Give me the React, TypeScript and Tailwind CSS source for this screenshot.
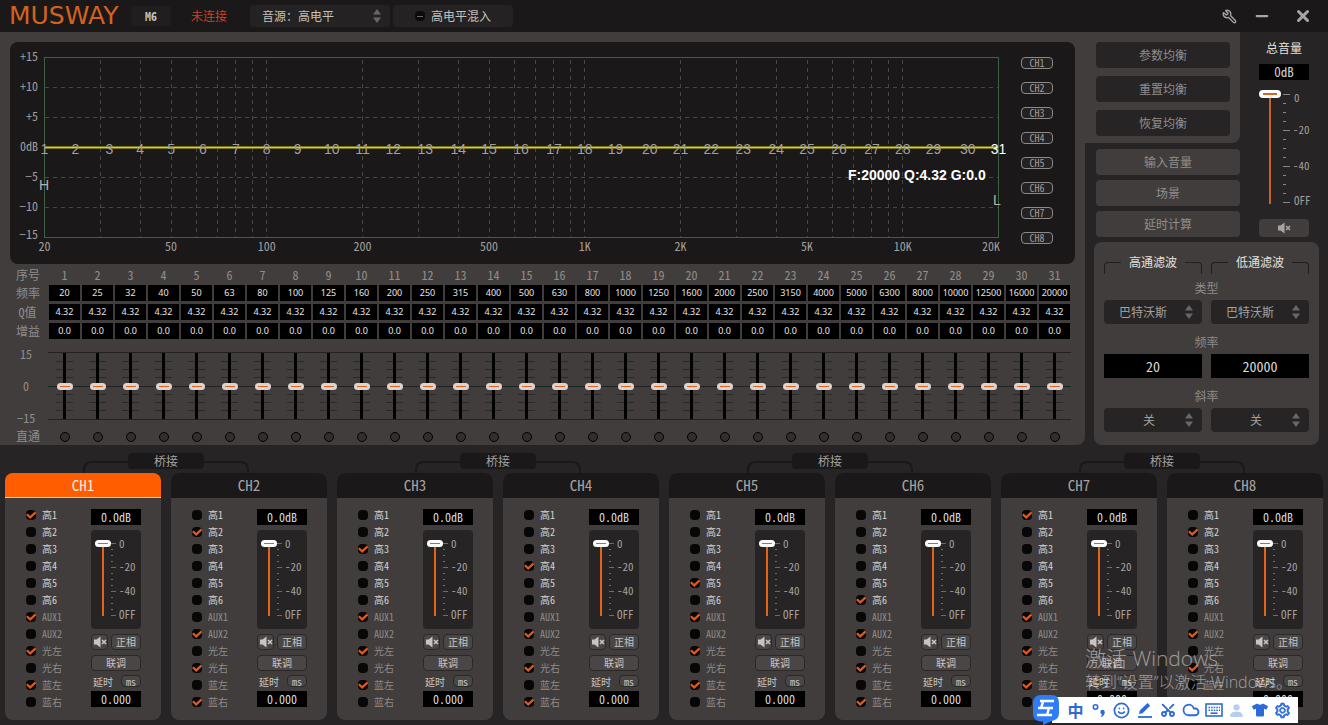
import type { ReactNode } from "react";
import { Cloud, Minus, Scissors, Smile, Wrench, X } from "lucide-react";
import { AiOutlineSetting } from "react-icons/ai";
import { BsPersonFill } from "react-icons/bs";
import { FaTshirt } from "react-icons/fa";

const FREQS = [
  20, 25, 32, 40, 50, 63, 80, 100, 125, 160, 200, 250, 315, 400, 500, 630, 800, 1000, 1250, 1600,
  2000, 2500, 3150, 4000, 5000, 6300, 8000, 10000, 12500, 16000, 20000,
];

const CHANNELS = [1, 2, 3, 4, 5, 6, 7, 8];

const INPUTS = [
  "高1", "高2", "高3", "高4", "高5", "高6",
  "AUX1", "AUX2", "光左", "光右", "蓝左", "蓝右",
];

// indexes into INPUTS that are routed to each output channel
const ROUTES: Record<number, number[]> = {
  1: [0, 6, 8, 10],
  2: [1, 7, 9, 11],
  3: [2, 6, 8, 10],
  4: [3, 7, 9, 11],
  5: [4, 6, 8, 10],
  6: [5, 7, 9, 11],
  7: [0, 6, 8, 10],
  8: [1, 7, 9, 11],
};

// 20Hz..20kHz on a log axis, 318px per decade
const freqX = (f: number) => 34.5 + Math.log10(f / 20) * 318;

const Arrows = () => (
  <svg viewBox="0 0 10 16" className="w-[10px] h-4 fill-[#6b6766]" aria-hidden="true">
    <path d="M5 1 L9 6.5 H1 Z M5 15 L1 9.5 H9 Z" />
  </svg>
);

const MuteIcon = ({ className }: { className: string }) => (
  <svg viewBox="0 0 14 12" className={className} aria-hidden="true">
    <path d="M1 3.5 H3.5 L7.5 0.5 V11.5 L3.5 8.5 H1 Z" fill="currentColor" />
    <path d="M9 4 L13 8 M13 4 L9 8" stroke="currentColor" strokeWidth="1.6" />
  </svg>
);

type PickerProps = { label: string; options: string[]; className: string };

const Picker = ({ label, options, className }: PickerProps) => (
  <div className="grid items-center">
    <select
      aria-label={label}
      className={`[grid-area:1/1] w-full appearance-none rounded outline-none ${className}`}
    >
      {options.map((o) => (
        <option key={o}>{o}</option>
      ))}
    </select>
    <span className="[grid-area:1/1] justify-self-end mr-2 pointer-events-none">
      <Arrows />
    </span>
  </div>
);

const Header = () => (
  <header className="flex items-center h-8 pl-[9px] pr-4 bg-[#1a1818] text-xs text-[#c4c0be]">
    <h1 className="w-[122px] font-['DejaVu_Sans',sans-serif] text-[25px] leading-8 text-[#d4621f]">
      MUSWAY
    </h1>
    <span className="w-10 h-5 leading-5 text-center font-bold rounded bg-[#201e1e]">M6</span>
    <span className="ml-5 text-[#c8412c]">未连接</span>
    <div className="w-[140px] ml-[23px]">
      <Picker
        label="音源"
        options={["音源：高电平", "音源：AUX", "音源：光纤", "音源：蓝牙"]}
        className="h-[22px] pl-3 bg-[#242222]"
      />
    </div>
    <label className="flex items-center gap-1.5 w-[120px] h-[22px] ml-[3px] pl-[22px] rounded bg-[#242222]">
      <span className="grid place-items-center">
        <input
          type="checkbox"
          className="[grid-area:1/1] appearance-none w-2.5 h-2.5 rounded-sm bg-[#0c0b0b]"
        />
        <span className="[grid-area:1/1] w-1.5 h-px bg-[#6a6665]" />
      </span>
      高电平混入
    </label>
    <div className="flex items-center ml-auto text-[#aaa6a5]">
      <button type="button" aria-label="设置">
        <Wrench size={15} strokeWidth={2.2} className="-scale-x-100" />
      </button>
      <button type="button" aria-label="最小化" className="ml-4">
        <Minus size={18} strokeWidth={3} />
      </button>
      <button type="button" aria-label="关闭" className="ml-[23px]">
        <X size={18} strokeWidth={4} />
      </button>
    </div>
  </header>
);

const EqGraph = () => {
  const gridFreqs = [
    30, 40, 50, 60, 70, 80, 90, 100, 200, 300, 400, 500, 600, 700, 800, 900, 1000, 2000, 3000, 4000,
    5000, 6000, 7000, 8000, 9000, 10000,
  ];
  const xLabels: [number, string][] = [
    [20, "20"], [50, "50"], [100, "100"], [200, "200"], [500, "500"],
    [1000, "1K"], [2000, "2K"], [5000, "5K"], [10000, "10K"],
  ];
  const yLabels = ["+15", "+10", "+5", "0dB", "−5", "−10", "−15"];

  return (
    <svg viewBox="0 0 1000 222" className="flex-1 min-w-0 text-xs" role="img" aria-label="EQ">
      <g stroke="#494645" strokeDasharray="4 4">
        {gridFreqs.map((f) => (
          <line key={f} x1={Math.floor(freqX(f)) + 0.5} x2={Math.floor(freqX(f)) + 0.5} y1="18" y2="195" />
        ))}
        {[45, 75, 135, 165].map((y) => (
          <line key={y} x1="35" x2="988" y1={y + 0.5} y2={y + 0.5} />
        ))}
      </g>
      <rect x="34.5" y="15.5" width="954" height="180" fill="none" stroke="#3d6043" />

      <g fill="#a19d9b">
        {yLabels.map((t, i) => (
          <text key={t} x="28" y={i === 6 ? 197 : 19 + i * 30} textAnchor="end">
            {t}
          </text>
        ))}
        {xLabels.map(([f, t]) => (
          <text key={t} x={freqX(f)} y="209" textAnchor="middle">
            {t}
          </text>
        ))}
        <text x="990" y="209" textAnchor="end">20K</text>
      </g>

      {/* response curve */}
      <line x1="35" x2="988" y1="105.5" y2="105.5" stroke="#77741a" strokeWidth="3" />
      <line x1="35" x2="988" y1="105.5" y2="105.5" stroke="#d8d310" />

      <g className="font-['Liberation_Sans',sans-serif] text-sm" textAnchor="middle">
        {FREQS.map((f, i) => (
          <text key={f} x={freqX(f)} y="112" fill={i === 30 ? "#ffffff" : "#a39f9e"}>
            {i + 1}
          </text>
        ))}
        <text x="34" y="148" fill="#b4b0ae">H</text>
        <text x="987" y="163" fill="#b4b0ae">L</text>
      </g>
      <text
        x="838"
        y="138"
        fill="#ffffff"
        className="font-['Liberation_Sans',sans-serif] text-sm font-bold"
      >
        F:20000 Q:4.32 G:0.0
      </text>
    </svg>
  );
};

const EqTable = () => {
  const rows: [string, (f: number) => string][] = [
    ["频率", (f) => String(f)],
    ["Q值", () => "4.32"],
    ["增益", () => "0.0"],
  ];

  return (
    <table className="w-[calc(100%-27px)] ml-3.5 table-fixed border-separate border-spacing-x-0.5 border-spacing-y-[3px] text-xs leading-[15px] text-[#918d8b]">
      <thead>
        <tr>
          <th className="p-0 pr-2 font-normal whitespace-nowrap">序号</th>
          {FREQS.map((f, i) => (
            <th key={f} className="p-0 font-normal">
              {i + 1}
            </th>
          ))}
        </tr>
      </thead>
      <tbody>
        {rows.map(([name, value]) => (
          <tr key={name}>
            <th className="h-4 p-0 pr-2 font-normal leading-4 whitespace-nowrap">{name}</th>
            {FREQS.map((f, i) => (
              <td key={f} className="h-4 p-0">
                <input
                  type="text"
                  aria-label={`${name} ${i + 1}`}
                  defaultValue={value(f)}
                  className="block w-full h-4 bg-black text-center font-['Noto_Sans',sans-serif] text-[9px] leading-4 text-[#e8e5e3] outline-none"
                />
              </td>
            ))}
          </tr>
        ))}
      </tbody>
    </table>
  );
};

const EqSliders = () => (
  <div className="grid grid-cols-[repeat(32,minmax(0,1fr))] gap-x-0.5 mt-2.5 ml-4 mr-[15px] text-xs leading-4 text-[#918d8b]">
    <div className="flex flex-col items-center justify-between w-5 h-20 -my-1.5">
      <span>15</span>
      <span>0</span>
      <span>−15</span>
    </div>
    {FREQS.map((f, i) => (
      <div key={f} className="grid justify-items-center -mx-px h-[68px] border-y border-[#242121]">
        <svg viewBox="0 0 33 66" className="[grid-area:1/1] w-full h-[66px]" aria-hidden="true">
          <path
            d="M8 8.5 H25 M8 16.5 H25 M8 24.5 H25 M8 41.5 H25 M8 49.5 H25 M8 57.5 H25"
            stroke="#2b2827"
          />
          <path d="M0 33.5 H33" stroke="#242121" />
        </svg>
        <input
          type="range"
          min={-15}
          max={15}
          defaultValue={0}
          aria-label={`增益 ${i + 1}`}
          className="[grid-area:1/1] appearance-none w-4 h-[66px] [writing-mode:vertical-lr] [direction:rtl] bg-transparent bg-[linear-gradient(#000,#000)] bg-[length:3px_100%] bg-center bg-no-repeat [&::-webkit-slider-thumb]:appearance-none [&::-webkit-slider-thumb]:w-4 [&::-webkit-slider-thumb]:h-[7px] [&::-webkit-slider-thumb]:rounded-sm [&::-webkit-slider-thumb]:bg-[#ddd3cf] [&::-webkit-slider-thumb]:bg-[linear-gradient(#d9641e,#d9641e)] [&::-webkit-slider-thumb]:bg-[length:10px_1px] [&::-webkit-slider-thumb]:bg-center [&::-webkit-slider-thumb]:bg-no-repeat"
        />
      </div>
    ))}
    <span className="mt-2 whitespace-nowrap">直通</span>
    {FREQS.map((f, i) => (
      <input
        key={f}
        type="radio"
        name={`bypass-${i}`}
        aria-label={`直通 ${i + 1}`}
        className="mt-3 justify-self-center appearance-none w-2.5 h-2.5 rounded-full border border-black bg-[#312e2d]"
      />
    ))}
  </div>
);

const FilterTitle = ({ children }: { children: ReactNode }) => (
  <div className="flex items-start">
    <span className="flex-1 h-3 mt-2 border-t border-l rounded-tl border-[#211e1e]" />
    <h2 className="px-2 leading-4 font-medium text-[#e4e1df]">{children}</h2>
    <span className="flex-1 h-3 mt-2 border-t border-r rounded-tr border-[#211e1e]" />
  </div>
);

const FilterPanel = () => {
  const select = "h-6 bg-[#262424] text-center [text-align-last:center] text-[#a5a19f]";
  const box = "w-full h-6 bg-black text-center text-sm text-[#dcd9d7] outline-none";
  return (
    <section className="mx-[9px] mt-[5px] h-[203px] px-2.5 pt-3 rounded-lg bg-[#403d3c] text-xs text-center text-[#8d8987]">
      <div className="grid grid-cols-2 gap-[9px]">
        <FilterTitle>高通滤波</FilterTitle>
        <FilterTitle>低通滤波</FilterTitle>
      </div>
      <p className="mt-1.5 leading-4">类型</p>
      <div className="grid grid-cols-2 gap-[9px] mt-1">
        <Picker label="高通类型" options={["巴特沃斯", "贝塞尔"]} className={`pr-5 ${select}`} />
        <Picker label="低通类型" options={["巴特沃斯", "贝塞尔"]} className={`pr-5 ${select}`} />
      </div>
      <p className="mt-2.5 leading-4">频率</p>
      <div className="grid grid-cols-2 gap-[9px] mt-1">
        <input type="text" aria-label="高通频率" defaultValue="20" className={box} />
        <input type="text" aria-label="低通频率" defaultValue="20000" className={box} />
      </div>
      <p className="mt-2.5 leading-4">斜率</p>
      <div className="grid grid-cols-2 gap-[9px] mt-1">
        <Picker label="高通斜率" options={["关", "12dB"]} className={`pr-2 ${select}`} />
        <Picker label="低通斜率" options={["关", "12dB"]} className={`pr-2 ${select}`} />
      </div>
    </section>
  );
};

const MasterVolume = () => (
  <section className="flex flex-col items-center w-[88px] pt-2 text-xs">
    <h2 className="leading-4 font-medium text-[#e4e1df]">总音量</h2>
    <input
      type="text"
      aria-label="总音量"
      defaultValue="0dB"
      className="w-[50px] h-4 mt-2 bg-black text-center text-[13px] text-[#d5d2d0] outline-none"
    />
    <div className="flex w-[54px] ml-1 mt-2.5 mb-[11px]">
      <input
        type="range"
        min={-60}
        max={0}
        defaultValue={0}
        aria-label="总音量推子"
        className="appearance-none shrink-0 w-[22px] h-[114px] [writing-mode:vertical-lr] [direction:rtl] bg-transparent bg-[linear-gradient(#c8612c,#c8612c)] bg-[length:2px_100%] bg-center bg-no-repeat [&::-webkit-slider-thumb]:appearance-none [&::-webkit-slider-thumb]:w-[22px] [&::-webkit-slider-thumb]:h-2 [&::-webkit-slider-thumb]:rounded-sm [&::-webkit-slider-thumb]:bg-white [&::-webkit-slider-thumb]:bg-[linear-gradient(#d9641e,#d9641e)] [&::-webkit-slider-thumb]:bg-[length:14px_2px] [&::-webkit-slider-thumb]:bg-center [&::-webkit-slider-thumb]:bg-no-repeat"
      />
      <svg viewBox="0 0 32 118" className="w-8 h-[118px] overflow-visible text-[11px]" aria-hidden="true">
        <path
          d="M2 4.5 H9 M2 40.5 H9 M2 76.5 H9 M2 112.5 H9 M2 13.5 H5 M2 22.5 H5 M2 31.5 H5 M2 49.5 H5 M2 58.5 H5 M2 67.5 H5 M2 85.5 H5 M2 94.5 H5 M2 103.5 H5"
          stroke="#8a8684"
        />
        <g fill="#a29e9c">
          <text x="13" y="12">0</text>
          <text x="12" y="44">-20</text>
          <text x="12" y="80">-40</text>
          <text x="13" y="115">OFF</text>
        </g>
      </svg>
    </div>
    <button
      type="button"
      aria-label="静音"
      className="grid place-items-center w-[50px] h-[18px] rounded bg-[#403d3c] text-[#a8a4a2]"
    >
      <MuteIcon className="w-3.5 h-3" />
    </button>
  </section>
);

const SidePanel = () => (
  <aside className="w-[243px] shrink-0">
    <div className="flex">
      <div className="flex-1 text-xs text-[#918d8b]">
        <div className="flex flex-col gap-2 h-[111px] pt-2.5 pl-[11px] pr-2.5 rounded-br-lg bg-[#403d3c]">
          {["参数均衡", "重置均衡", "恢复均衡"].map((t) => (
            <button key={t} type="button" className="h-[26px] rounded bg-[#262424]">
              {t}
            </button>
          ))}
        </div>
        <div className="flex flex-col gap-[5px] mt-1.5 pl-[11px]">
          {["输入音量", "场景", "延时计算"].map((t) => (
            <button key={t} type="button" className="h-[26px] rounded bg-[#403d3c]">
              {t}
            </button>
          ))}
        </div>
      </div>
      <MasterVolume />
    </div>
    <FilterPanel />
  </aside>
);

const RouteCheck = ({ name, checked }: { name: string; checked: boolean }) => (
  <label className="flex items-center gap-1.5 h-[17px] whitespace-nowrap">
    <span className="grid place-items-center">
      <input
        type="checkbox"
        defaultChecked={checked}
        className="peer [grid-area:1/1] appearance-none w-2.5 h-2.5 rounded-sm bg-[#080707]"
      />
      <svg
        viewBox="0 0 10 10"
        className="[grid-area:1/1] hidden peer-checked:block w-2.5 h-2.5 pointer-events-none overflow-visible"
        aria-hidden="true"
      >
        <path d="M0.8 4.2 L4.2 7.4 L9.6 2.4" fill="none" stroke="#dd5a1c" strokeWidth="2.2" />
      </svg>
    </span>
    <span className={name.startsWith("高") ? "text-[#d6d3d1]" : "text-[#8f8b89]"}>{name}</span>
  </label>
);

const ChannelStrip = ({ n }: { n: number }) => {
  const active = n === 1;
  const button = "rounded-sm border border-[#2b2827] bg-[#4a4645] text-[#c8c4c2]";
  const box = "block w-full h-4 bg-black text-center text-xs text-[#dcd9d7] outline-none";

  return (
    <section className="flex flex-col rounded-lg overflow-hidden bg-[#403d3c]">
      <h2
        className={`h-[25px] leading-6 text-center text-[15px] border-b ${
          active
            ? "bg-[#ff5d00] border-[#f3cdb5] text-[#f6ece4]"
            : "bg-[#1a1818] border-[#1a1818] text-[#a5a19f]"
        }`}
      >
        CH{n}
      </h2>
      <div className="flex justify-between pt-2 pl-[21px] pr-5 pb-2.5 text-[10px]">
        <div>
          {INPUTS.map((name, i) => (
            <RouteCheck key={name} name={name} checked={ROUTES[n].includes(i)} />
          ))}
        </div>
        <div className="w-[50px] pt-[3px]">
          <input type="text" aria-label={`CH${n} 音量`} defaultValue="0.0dB" className={box} />
          <div className="flex h-[99px] mt-[5px] pl-1 pt-2.5 rounded bg-[#262424]">
            <input
              type="range"
              min={-60}
              max={0}
              defaultValue={0}
              aria-label={`CH${n} 推子`}
              className="appearance-none shrink-0 w-4 h-[76px] [writing-mode:vertical-lr] [direction:rtl] bg-transparent bg-[linear-gradient(#e5641a,#e5641a)] bg-[length:2px_100%] bg-center bg-no-repeat [&::-webkit-slider-thumb]:appearance-none [&::-webkit-slider-thumb]:w-4 [&::-webkit-slider-thumb]:h-[7px] [&::-webkit-slider-thumb]:rounded-sm [&::-webkit-slider-thumb]:bg-white [&::-webkit-slider-thumb]:bg-[linear-gradient(#d9641e,#d9641e)] [&::-webkit-slider-thumb]:bg-[length:10px_1px] [&::-webkit-slider-thumb]:bg-center [&::-webkit-slider-thumb]:bg-no-repeat"
            />
            <svg viewBox="0 0 30 84" className="w-[30px] h-[84px] overflow-visible text-[11px]" aria-hidden="true">
              <path
                d="M0 3.5 H5 M0 27.5 H5 M0 51.5 H5 M0 75.5 H5 M0 9.5 H2 M0 15.5 H2 M0 21.5 H2 M0 33.5 H2 M0 39.5 H2 M0 45.5 H2 M0 57.5 H2 M0 63.5 H2 M0 69.5 H2"
                stroke="#6f6b6a"
              />
              <g fill="#a5a19f">
                <text x="8" y="8">0</text>
                <text x="8" y="31">-20</text>
                <text x="8" y="55">-40</text>
                <text x="8" y="79">OFF</text>
              </g>
            </svg>
          </div>
          <div className="flex gap-[3px] mt-[5px]">
            <button
              type="button"
              aria-label={`CH${n} 静音`}
              className={`grid place-items-center w-[17px] h-4 ${button}`}
            >
              <MuteIcon className="w-3.5 h-3" />
            </button>
            <button type="button" className={`flex-1 h-4 leading-3 ${button}`}>
              正相
            </button>
          </div>
          <button type="button" className={`block w-full h-4 mt-[5px] leading-3 ${button}`}>
            联调
          </button>
          <div className="flex items-center justify-between h-3 my-1 text-[#c8c4c2]">
            <span className="pl-0.5">延时</span>
            <button type="button" className={`w-5 h-3 leading-[9px] ${button}`}>
              ms
            </button>
          </div>
          <input type="text" aria-label={`CH${n} 延时`} defaultValue="0.000" className={box} />
        </div>
      </div>
    </section>
  );
};

const ChannelPair = ({ first }: { first: number }) => (
  <div>
    {/* bridge link between the two strips */}
    <div className="flex items-start h-7 mx-[78px] pt-2">
      <span className="flex-1 h-5 mt-2 border-t-2 border-l-2 rounded-tl-lg border-[#1a1818]" />
      <button
        type="button"
        className="w-[76px] h-4 rounded bg-[#1a1818] text-xs leading-4 text-[#a5a19f]"
      >
        桥接
      </button>
      <span className="flex-1 h-5 mt-2 border-t-2 border-r-2 rounded-tr-lg border-[#1a1818]" />
    </div>
    <div className="grid grid-cols-2 gap-2.5">
      <ChannelStrip n={first} />
      <ChannelStrip n={first + 1} />
    </div>
  </div>
);

const Watermark = () => (
  <div className="absolute right-[45px] bottom-[33px] w-[198px] pointer-events-none font-['Open_Sans','Noto_Sans_CJK_SC',sans-serif] font-light text-white/50 whitespace-nowrap">
    <p className="text-[21px] leading-7">激活 Windows</p>
    <p className="text-base leading-5">转到“设置”以激活 Windows。</p>
  </div>
);

const ImeBar = () => (
  <div className="absolute right-[30px] bottom-0 flex items-center h-[30px] text-[#2c6bd6]">
    <svg viewBox="0 0 28 30" className="w-7 h-[30px] z-10" aria-hidden="true">
      <path
        d="M9 0 H19 C25 0 27 3 27 8 V18 C27 23 24 25 20 26 L11 30 V26.5 C4 26.5 1 24 1 18 V9 C1 3 4 0 9 0 Z"
        fill="#2f7df6"
      />
      <path
        d="M8 6 H22 M6 13 H21 M5 20 H20 M11 7 L9 13 M17 13 L15 20"
        stroke="#fff"
        strokeWidth="2.4"
        fill="none"
      />
    </svg>
    <div className="grid grid-cols-10 place-items-center w-[246px] h-[26px] -ml-2 pl-3 pr-1 bg-white">
      <span className="text-base leading-6 font-bold">中</span>
      <svg viewBox="0 0 16 16" className="w-4 h-4" aria-hidden="true">
        <circle cx="4.5" cy="5" r="2.2" fill="none" stroke="currentColor" strokeWidth="1.6" />
        <circle cx="11.5" cy="10" r="2.2" fill="currentColor" />
        <path d="M13.7 10 C13.7 13 12 14.5 9.8 15 L11 12 Z" fill="currentColor" />
      </svg>
      <Smile size={17} strokeWidth={2.4} />
      <svg viewBox="0 0 16 16" className="w-4 h-4" aria-hidden="true">
        <path d="M2 12 L2.8 8.5 L10.5 1 L13.2 3.8 L5.5 11.3 Z" fill="currentColor" />
        <path d="M1 15 H15" stroke="currentColor" strokeWidth="1.8" />
      </svg>
      <Scissors size={16} strokeWidth={2.8} className="-rotate-90" />
      <Cloud size={18} strokeWidth={2.4} />
      <svg viewBox="0 0 18 14" className="w-[18px] h-3.5" fill="none" stroke="currentColor" aria-hidden="true">
        <rect x="1" y="1" width="16" height="12" strokeWidth="1.6" />
        <path d="M3.5 4.5 H15 M3.5 7.2 H15" strokeWidth="1.6" strokeDasharray="1.6 1" />
        <path d="M5.5 10.2 H12.5" strokeWidth="1.6" />
      </svg>
      <BsPersonFill size={17} className="text-[#b9cdf2]" />
      <FaTshirt size={16} />
      <AiOutlineSetting size={17} stroke="currentColor" strokeWidth={50} />
    </div>
  </div>
);

export default function App() {
  return (
    <div className="relative min-h-screen overflow-hidden bg-[#262424] font-['Noto_Sans_Mono_CJK_SC','Noto_Sans_CJK_SC',monospace]">
      <Header />
      <div className="flex">
        <main className="flex-1 min-w-0 pt-2.5 rounded-br-lg bg-[#403d3c]">
          <div className="flex mx-2.5 rounded-lg bg-[#1a1818]">
            <EqGraph />
            <div className="flex flex-col items-start gap-[13px] w-[65px] pt-[15px] pl-[11px]">
              {CHANNELS.map((n) => (
                <button
                  key={n}
                  type="button"
                  className="w-8 h-3 rounded-sm border border-[#8d8987] bg-[#232121] text-[10px] leading-[10px] text-[#a19d9b]"
                >
                  CH{n}
                </button>
              ))}
            </div>
          </div>
          <EqTable />
          <EqSliders />
        </main>
        <SidePanel />
      </div>
      <div className="grid grid-cols-4 gap-2.5 px-[5px] pb-[5px]">
        {[1, 3, 5, 7].map((n) => (
          <ChannelPair key={n} first={n} />
        ))}
      </div>
      <Watermark />
      <ImeBar />
    </div>
  );
}
